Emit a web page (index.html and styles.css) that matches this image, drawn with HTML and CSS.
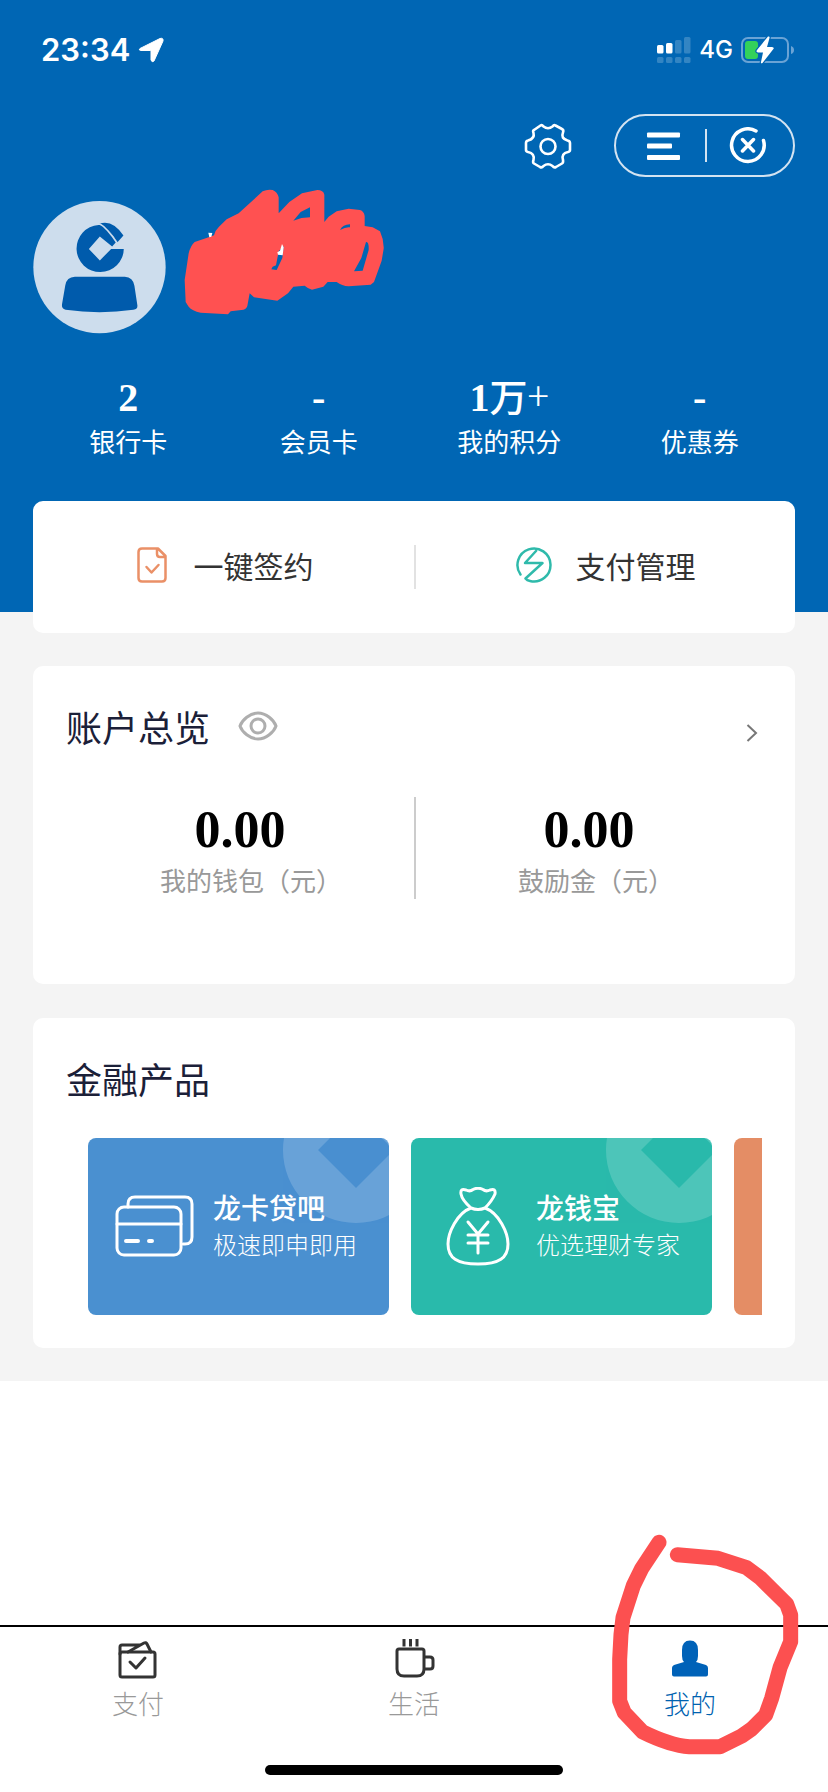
FILE: index.html
```html
<!DOCTYPE html>
<html lang="zh-CN">
<head>
<meta charset="UTF-8">
<meta name="viewport" content="width=device-width, initial-scale=1">
<title>我的</title>
<link rel="stylesheet" href="styles.css">
</head>
<body>
<div class="app">
  <header class="hero">
    <div class="status">
      <div class="status-time">
        <span>23:34</span>
        <svg width="26" height="26" viewBox="0 0 26 26" aria-hidden="true"><path d="M2 11.500 22 1.500Q25.500 .5 25 4L16 24Q14 26 13 23V14.500Q13 13.500 12 13.500H3Q0 13 2 11.500Z" fill="#fff" stroke="#fff" stroke-linejoin="round"/></svg>
      </div>
      <div class="status-right">
        <svg width="34" height="28" viewBox="0 0 34 28" aria-hidden="true">
          <g fill="#fff"><rect x="0" y="9" width="6.500" height="8.500" rx="1.500"/><rect x="9" y="7" width="6.500" height="10.500" rx="1.500"/>
          <g opacity=".2"><rect x="18" y="4" width="6.500" height="13.500" rx="1.500"/><rect x="27" y="1" width="6.500" height="16.500" rx="1.500"/><rect x="0" y="21" width="6.500" height="6" rx="1.500"/><rect x="9" y="21" width="6.500" height="6" rx="1.500"/><rect x="18" y="21" width="6.500" height="6" rx="1.500"/><rect x="27" y="21" width="6.500" height="6" rx="1.500"/></g></g>
        </svg>
        <span class="network">4G</span>
        <svg width="54" height="28" viewBox="0 0 54 28" aria-hidden="true">
          <rect x="1" y="2" width="46" height="24" rx="6" fill="none" stroke="#6aa3d5" stroke-width="2"/>
          <path d="M50 10Q53 11 53 14T50 18Z" fill="#6aa3d5"/>
          <rect x="4" y="5" width="13" height="18" rx="3" fill="#33d15b"/>
          <path d="M27 .5Q29 0 28.500 2L26 11H31Q34 11.500 32 13.500L21.500 27Q19.500 28 20 26L22 16.500H17Q14.500 16 16 14Z" fill="#fff" stroke="#0066b4" stroke-width="2.500" paint-order="stroke"/>
        </svg>
      </div>
    </div>

    <div class="toolbar">
      <button class="icon-button" type="button" aria-label="设置">
        <svg width="48" height="48" viewBox="0 0 48 48" fill="none" stroke="#fff" stroke-width="2.600" stroke-linejoin="round"><path d="M10 8 16.500 3.500Q18 2.500 19.500 4.500Q24 8 28.500 4.500Q30 2.500 31.500 3.500L38 7Q40 8 39 10.500Q36.500 16.500 43.500 18.500Q46 19 46 21V28Q46 29.500 44 30Q37 31.500 39 38Q39.500 40.500 38 41.500L32 45Q30 46 28.500 44Q24 40.500 19.500 44Q18 46 16 45L10 41.500Q8.500 40.500 9.500 38Q11 31.500 4 30Q2 29.500 2 28V21Q2 19 4 18.500Q11 16.500 9.500 11Q8.500 8.500 10 8Z"/><circle cx="24" cy="24.500" r="7.500"/></svg>
      </button>
      <div class="capsule">
        <button class="icon-button" type="button" aria-label="菜单">
          <svg width="36" height="36" viewBox="0 0 36 36" fill="#fff"><rect x="1" y="4.500" width="33" height="5" rx="1"/><rect x="1" y="15.500" width="25" height="5" rx="1"/><rect x="1" y="27" width="33" height="5" rx="1"/></svg>
        </button>
        <span class="capsule-line"></span>
        <button class="icon-button" type="button" aria-label="关闭">
          <svg width="38" height="38" viewBox="0 0 38 38" fill="none" stroke="#fff" stroke-width="3.500" stroke-linecap="round"><path d="M27 4A16.300 16.300 0 1 0 34.500 13.500M13.500 12.500 24.500 24M24.500 12.500 13.500 24"/></svg>
        </button>
      </div>
    </div>

    <div class="profile">
      <svg class="avatar" width="133" height="133" viewBox="0 0 400 400" role="img" aria-label="头像">
        <circle cx="200" cy="199" r="199" fill="#cddded"/>
        <g fill="#005bac">
          <path fill-rule="evenodd" d="M197 72Q212 71 220 80L252 121 238 137 201 107 168 144 201 179 235 144H273A71 71 0 1 1 197 72Z"/>
          <path d="M200 68Q240 55 272 104L254 124Q228 82 200 68Z"/>
          <path d="M200 68Q222 80 254 128" fill="none" stroke="#cddded" stroke-width="5"/>
          <path d="M126 228H276Q301 230 305 255L314 314Q315 325 302 327Q200 342 98 327Q86 324 87 312L97 254Q101 229 126 228Z"/>
        </g>
      </svg>
      <svg class="scribble" width="208" height="133" viewBox="540 555 624 399" aria-hidden="true">
        <path d="M584 726 626 712 642 706Q646 690 657 680L680 658 716 640 788 574Q802 567 818 570 832 576 836 592V640L868 606 906 580 952 570Q970 570 973 584V666L986 650 1010 634 1046 626 1080 630Q1092 634 1094 648V678L1118 682 1140 694Q1152 720 1151 746L1145 782 1122 846 1112 854 1046 859Q1026 858 1010 846H983L970 860 936 869Q924 866 914 857L880 860 864 880 832 902 762 892 749 880 742 918Q738 930 724 930L692 934 684 943 602 938Q576 932 566 920L557 906 554 840 566 760Q572 736 584 726Z" fill="#ff5151"/>
        <g fill="#0066b4"><path d="M930 622V652Q904 652 880 662L902 636Z"/><path d="M1098 726Q1107 724 1106 750L1088 812 1062 814 1084 774Z"/><path d="M836 754 851 738 847 774 830 810 814 808 818 800 828 796Z"/><path d="M1020 690Q1028 674 1050 673V682Q1038 680 1020 690Z"/></g>
        <path d="M625 698 637 699 634 710 628 712ZM846 732 851 742 848 766 834 764 832 757 840 752Z" fill="#fff"/>
      </svg>
    </div>

    <div class="stats">
      <a class="stat" href="#"><strong class="stat-value">2</strong><span class="stat-label">银行卡</span></a>
      <a class="stat" href="#"><strong class="stat-value">-</strong><span class="stat-label">会员卡</span></a>
      <a class="stat" href="#"><strong class="stat-value">1<span class="unit">万</span><span class="plus">+</span></strong><span class="stat-label">我的积分</span></a>
      <a class="stat" href="#"><strong class="stat-value">-</strong><span class="stat-label">优惠券</span></a>
    </div>
  </header>

  <main class="content">
    <section class="card actions">
      <a class="action" href="#">
        <svg width="36" height="36" viewBox="0 0 36 36" fill="none" stroke="#ea9067" stroke-width="2.500" stroke-linecap="round" stroke-linejoin="round"><path d="M24 1.500H8Q4.500 1.500 4.500 5V31Q4.500 34.500 8 34.500H28Q31.500 34.500 31.500 31V9ZM23 2V7Q23 10 26 10H31M12.500 20 17.500 25.500 24.500 18"/></svg>
        <span>一键签约</span>
      </a>
      <a class="action" href="#">
        <svg width="36" height="36" viewBox="0 0 36 36" fill="none" stroke="#2fbaab" stroke-width="2.500" stroke-linecap="round" stroke-linejoin="round"><path d="M4.500 27.500A16.500 16.500 0 1 1 14 34Q11 33.500 9.500 31.500L26.500 16H9L20 4"/></svg>
        <span>支付管理</span>
      </a>
    </section>

    <section class="card account">
      <div class="card-head">
        <h2 class="card-title">账户总览</h2>
        <button class="icon-button" type="button" aria-label="隐藏金额">
          <svg width="40" height="30" viewBox="0 0 40 30" fill="none" stroke="#aeaeae" stroke-width="3"><path d="M2 15C4 9 12 2 20 2S36 9 38 15C36 21 28 28 20 28S4 21 2 15Z"/><circle cx="20" cy="15" r="7"/></svg>
        </button>
        <a class="more" href="#" aria-label="查看账户"><svg width="14" height="20" viewBox="0 0 14 20" fill="none" stroke="#777" stroke-width="2"><path d="M2.500 2 11 10 2.500 18"/></svg></a>
      </div>
      <div class="amounts">
        <div class="amount"><strong class="amount-value">0.00</strong><span class="amount-label">我的钱包（元）</span></div>
        <div class="amount"><strong class="amount-value">0.00</strong><span class="amount-label">鼓励金（元）</span></div>
      </div>
    </section>

    <section class="card products">
      <h2 class="card-title">金融产品</h2>
      <div class="tiles">
        <a class="tile tile-blue" href="#">
          <svg class="mark" width="108" height="86" viewBox="-1 -1 108 86" aria-hidden="true"><path fill-rule="evenodd" d="M1 11A73 73 0 0 1 147 11A73 73 0 0 1 1 11ZM36 11 74 49 112 11 74-27Z" fill="#fff"/></svg>
          <svg class="tile-icon" width="80" height="80" viewBox="0 0 80 80" fill="none" stroke="#fff" stroke-width="3" stroke-linecap="round"><path d="M13 20V17Q13 10 20 10H70Q77 10 77 17V50Q77 57 70 57H68"/><rect x="2" y="20" width="64" height="48" rx="7"/><path d="M2 37H66"/><path d="M11 54H23M34 54H37" stroke-width="4"/></svg>
          <span class="tile-text"><b class="tile-name">龙卡贷吧</b><span class="tile-desc">极速即申即用</span></span>
        </a>
        <a class="tile tile-green" href="#">
          <svg class="mark" width="108" height="86" viewBox="-1 -1 108 86" aria-hidden="true"><path fill-rule="evenodd" d="M1 11A73 73 0 0 1 147 11A73 73 0 0 1 1 11ZM36 11 74 49 112 11 74-27Z" fill="#fff"/></svg>
          <svg class="tile-icon" width="80" height="80" viewBox="-2 0 80 80" fill="none" stroke="#fff" stroke-width="3" stroke-linecap="round" stroke-linejoin="round"><path d="M31 21Q22 13 21 7Q20 1 26 3Q30 5 33 2.500Q38 0 43 2.500Q46 5 50 3Q56 1 55 7Q52 14 45 21Q38 24 31 21ZM31 21C17 26 8 46 8 57C8 71 17 77 38 77S68 71 68 57C68 46 59 26 45 21"/><path d="M28 35 38 47 48 35M28 48H48M28 56H48M38 47V66"/></svg>
          <span class="tile-text"><b class="tile-name">龙钱宝</b><span class="tile-desc">优选理财专家</span></span>
        </a>
        <a class="tile tile-orange" href="#" aria-label="更多产品"></a>
      </div>
    </section>
  </main>

  <nav class="tabbar">
    <a class="tab" href="#">
      <svg width="44" height="44" viewBox="0 0 44 44" fill="none" stroke="#333" stroke-width="3" stroke-linecap="round" stroke-linejoin="round"><rect x="4" y="14" width="35" height="25" rx="2"/><path d="M4 16V9Q4 7 6 7H24M12 14 28 5Q30 4 31 6L35 14M14 24 20 30 29 20"/></svg>
      <span>支付</span>
    </a>
    <a class="tab" href="#">
      <svg width="44" height="44" viewBox="0 0 44 44" fill="none" stroke="#333" stroke-width="3"><path d="M7 11H30Q32 11 32 13V31Q32 38 25 38H12Q5 38 5 31V13Q5 11 7 11ZM32 19H38Q41 19 41 22V28Q41 31 38 31H32"/><path d="M12 1V8.500M18.500 1V8.500M25 1V8.500"/></svg>
      <span>生活</span>
    </a>
    <a class="tab tab-active" href="#" aria-current="page">
      <svg width="44" height="44" viewBox="0 0 44 44" fill="#0062b8"><path d="M14 12Q14 2.500 22 2.500T30 12V18Q30 22 28 24L38 27Q40 28 40 30V36.500Q40 38.500 38 38.500H6Q4 38.500 4 36.500V30Q4 28 6 27L16 24Q14 22 14 18Z"/></svg>
      <span>我的</span>
      <svg class="ring" width="268" height="292" viewBox="0 0 804 876" fill="none" stroke="#fc5050" stroke-width="45" stroke-linecap="round" stroke-linejoin="round" aria-hidden="true"><path d="M297 124 245 203 220 254 189 350 183 400 179 475V600L193 635 247 692Q330 733 388 737H480L545 705 575 684 617 642 635 592 660 500 692 422V342L680 309 600 230 560 200 474 172 352 161"/></svg>
    </a>
  </nav>
  <div class="home-bar"></div>
</div>
</body>
</html>
```

FILE: styles.css
```css
* {
  box-sizing: border-box;
}

body {
  margin: 0;
  background: #fff;
  font-family: "Noto Sans CJK SC", sans-serif;
  font-weight: 400;
}

a {
  color: inherit;
  text-decoration: none;
}

svg {
  display: block;
  flex: none;
}

.app {
  display: flex;
  flex-direction: column;
  min-height: 100vh;
  overflow: hidden;
}

.hero {
  padding: 0 33px 153px;
  background: #0066b4;
  color: #fff;
}

.status {
  display: flex;
  justify-content: space-between;
  align-items: center;
  height: 100px;
  padding-left: 8px;
  font-family: Inter, sans-serif;
}

.status-time,
.status-right {
  display: flex;
  align-items: center;
  gap: 8px;
}

.status-time {
  font-size: 31px;
  font-weight: 600;
  line-height: 40px;
}

.network {
  font-size: 24px;
  font-weight: 500;
  line-height: 28px;
}

.toolbar {
  display: flex;
  justify-content: flex-end;
  align-items: center;
  gap: 42px;
  margin-top: 14px;
}

.icon-button {
  padding: 0;
  border: 0;
  background: none;
}

.capsule {
  display: flex;
  justify-content: space-between;
  align-items: center;
  width: 181px;
  height: 63px;
  padding: 0 26px 0 30px;
  border: 2px solid #d3e3f1;
  border-radius: 32px;
}

.capsule-line {
  width: 2px;
  height: 33px;
  background: #d3e3f1;
}

.profile {
  display: flex;
  gap: 14px;
  height: 149px;
  margin-top: 8px;
}

.avatar {
  align-self: flex-end;
}

.stats {
  display: grid;
  grid-template-columns: repeat(4, 1fr);
  margin-top: 39px;
}

.stat {
  display: flex;
  flex-direction: column;
  align-items: center;
}

.stat-value {
  height: 50px;
  font-family: "Liberation Serif", "Noto Sans CJK SC", serif;
  font-size: 40px;
  font-weight: 700;
  line-height: 50px;
}

.unit {
  font-size: 38px;
  font-weight: 500;
  line-height: 1;
}

.plus {
  font-family: "Noto Sans CJK SC", sans-serif;
  font-weight: 300;
  line-height: 1;
}

.stat-label {
  font-size: 26px;
  line-height: 36px;
}

.content {
  padding: 0 33px 33px;
  background: #f4f4f4;
}

.card {
  border-radius: 10px;
  background: #fff;
}

.actions {
  position: relative;
  display: grid;
  grid-template-columns: 1fr 1fr;
  margin-top: -111px;
  padding: 44px 0;
}

.action {
  display: flex;
  justify-content: center;
  align-items: center;
  gap: 24px;
  padding-bottom: 4px;
  color: #333;
  font-size: 30px;
  line-height: 40px;
}

.action + .action {
  border-left: 2px solid #e2e2e2;
}

.account {
  margin-top: 33px;
  padding: 36px 33px 85px;
}

.card-head {
  display: flex;
  align-items: center;
  gap: 28px;
}

.card-title {
  margin: 0;
  color: #1b2038;
  font-size: 36px;
  font-weight: 400;
  line-height: 48px;
}

.more {
  margin: 14px 3px 0 auto;
}

.amounts {
  display: grid;
  grid-template-columns: 1fr 1fr;
  margin-top: 47px;
}

.amount {
  display: flex;
  flex-direction: column;
  align-items: center;
  height: 102px;
}

.amount + .amount {
  border-left: 2px solid #ccc;
}

.amount-value {
  color: #000;
  font-family: "Liberation Serif", serif;
  font-size: 52px;
  font-weight: 700;
  line-height: 66px;
}

.amount-label {
  padding-left: 22px;
  color: #999;
  font-size: 26px;
  line-height: 34px;
}

.amount + .amount .amount-label {
  padding-left: 14px;
}

.products {
  margin-top: 34px;
  padding: 36px 33px 33px;
}

.tiles {
  display: flex;
  gap: 22px;
  margin-top: 36px;
  padding-left: 22px;
  overflow: hidden;
}

.tile {
  position: relative;
  display: flex;
  flex: none;
  align-items: center;
  gap: 18px;
  width: 301px;
  height: 177px;
  padding-left: 27px;
  overflow: hidden;
  border-radius: 8px;
  color: #fff;
}

.tile-blue {
  background: #4a90d0;
}

.tile-green {
  background: #29baab;
}

.tile-orange {
  background: #e48d65;
}

.mark {
  position: absolute;
  top: 0;
  right: 0;
  opacity: .17;
}

.tile-text {
  position: relative;
  display: flex;
  flex-direction: column;
  padding-bottom: 6px;
}

.tile-name {
  font-size: 28px;
  font-weight: 500;
  line-height: 40px;
}

.tile-desc {
  font-size: 24px;
  font-weight: 300;
  line-height: 34px;
}

.tabbar {
  display: grid;
  grid-template-columns: repeat(3, 1fr);
  margin-top: auto;
  border-top: 2px solid #000;
}

.tab {
  position: relative;
  display: flex;
  flex-direction: column;
  align-items: center;
  gap: 3px;
  padding: 11px 0 44px;
  color: #999;
  font-size: 26px;
  font-weight: 300;
  line-height: 36px;
}

.tab-active {
  color: #0062b0;
}

.ring {
  position: absolute;
  top: -126px;
  left: 8px;
}

.home-bar {
  align-self: center;
  width: 36%;
  height: 10px;
  margin-bottom: 17px;
  border-radius: 5px;
  background: #000;
}
```
